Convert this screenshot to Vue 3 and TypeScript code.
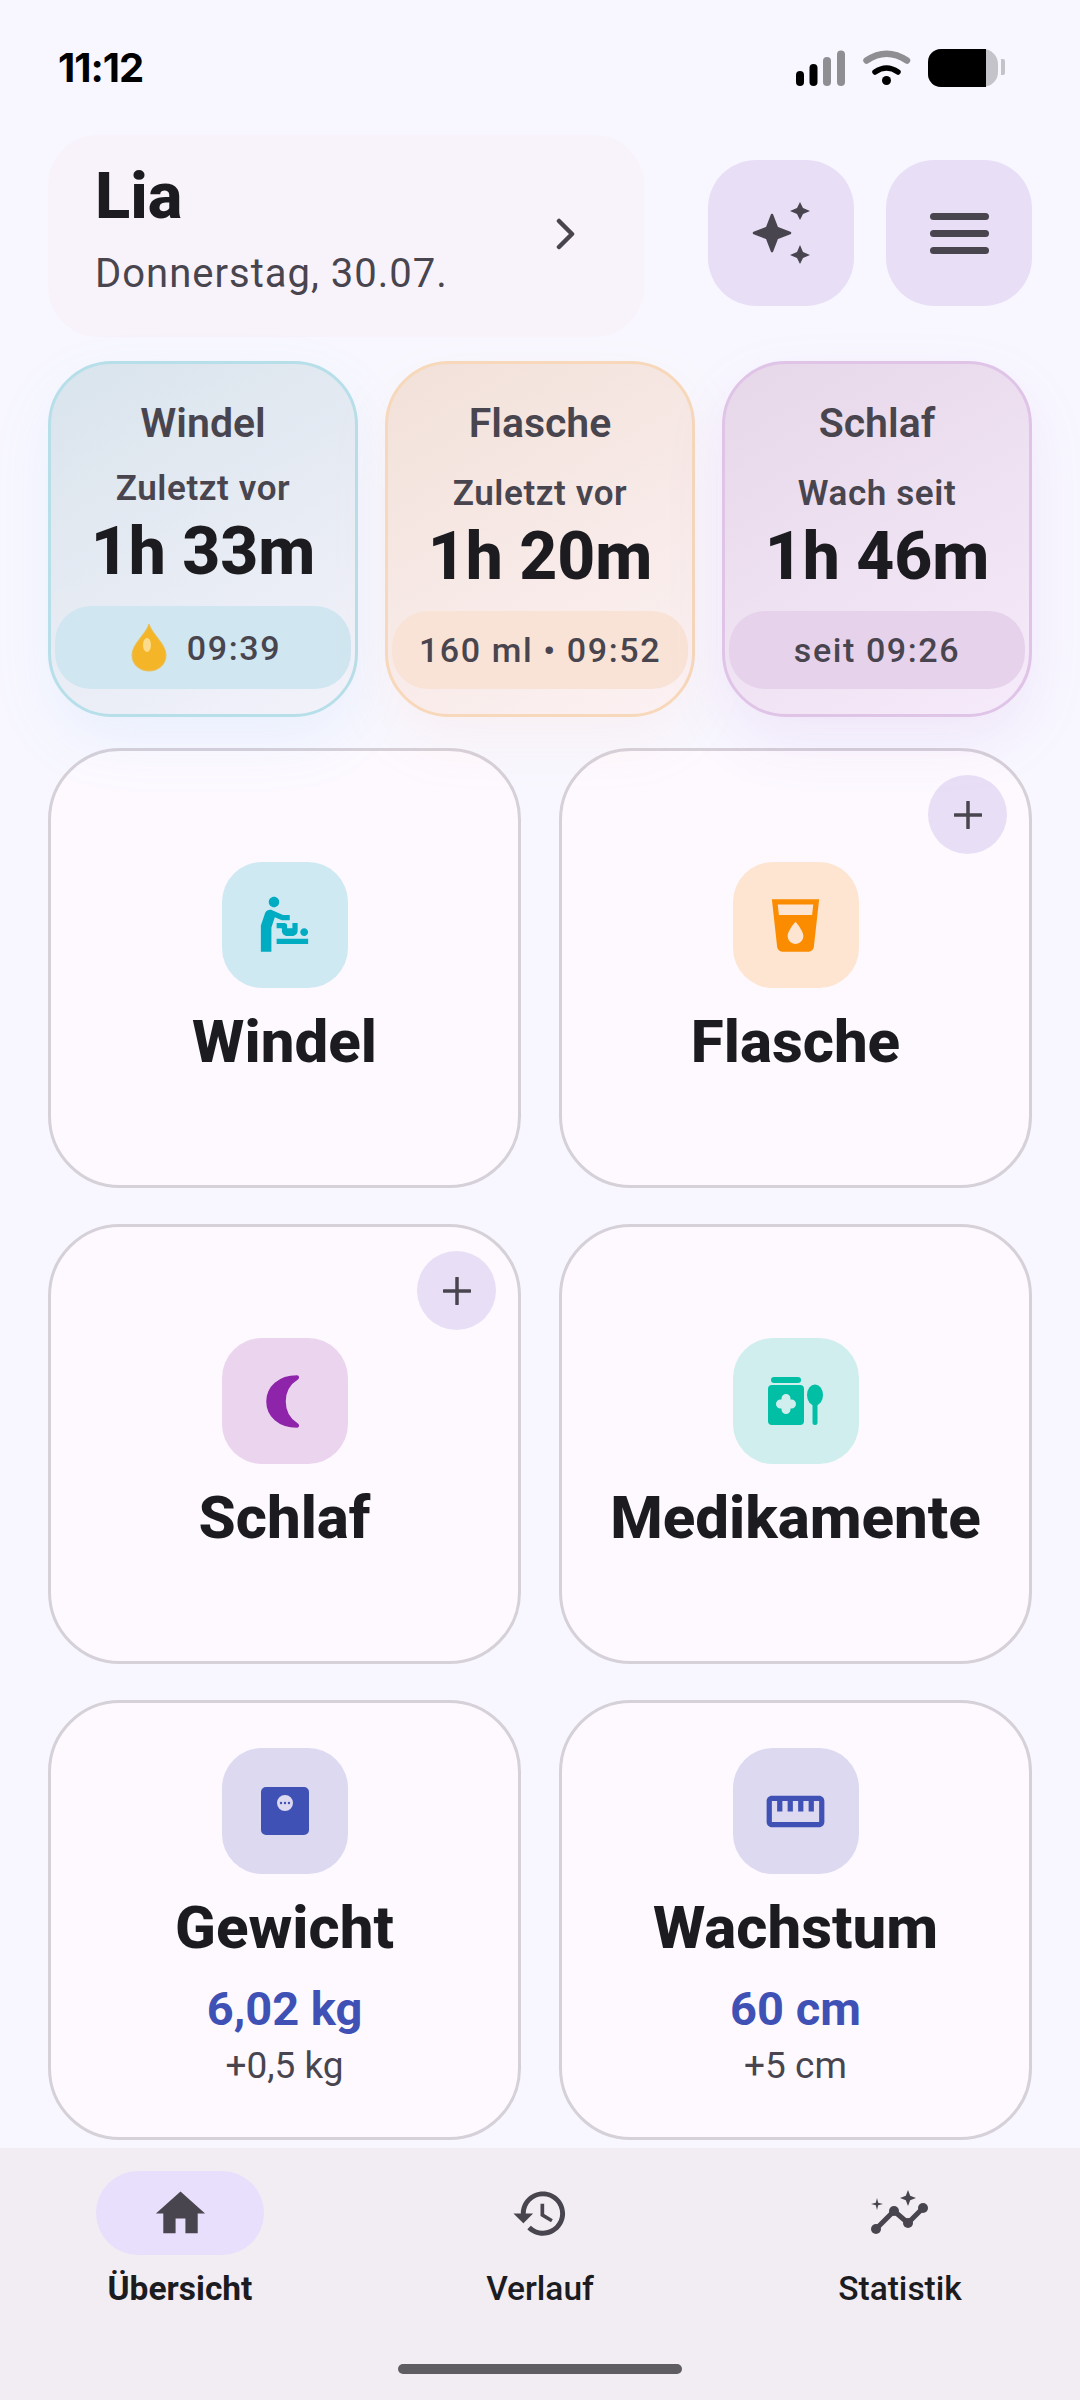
<template>
  <div class="screen">
    <div class="status">
      <span class="time">11:12</span>
      <div class="status-icons">
        <svg class="signal" width="50" height="36" viewBox="0 0 50 36">
          <rect x="0" y="21" width="8" height="15" rx="4" fill="#000" />
          <rect x="13.500" y="14" width="8" height="22" rx="4" fill="#000" />
          <rect x="27" y="7" width="8" height="29" rx="4" fill="#8e8e93" />
          <rect x="41" y="0.500" width="8" height="35.500" rx="4" fill="#8e8e93" />
        </svg>
        <svg class="wifi" width="48" height="36" viewBox="0 0 48 36">
          <path d="M3.500 10.500Q23.500-3 44 10.500" fill="none" stroke="#8e8e93" stroke-width="6.500" stroke-linecap="round" />
          <path d="M12 22Q23.500 14 35 22" fill="none" stroke="#000" stroke-width="5.500" stroke-linecap="round" />
          <circle cx="23.500" cy="30.500" r="4.500" fill="#000" />
        </svg>
        <div class="battery">
          <div class="battery-fill"></div>
          <div class="battery-nub"></div>
        </div>
      </div>
    </div>

    <header class="header">
      <div class="profile">
        <div>
          <div class="name">Lia</div>
          <div class="date">Donnerstag, 30.07.</div>
        </div>
        <svg class="chevron" width="20" height="32" viewBox="0 0 20 32">
          <path d="M3 3l13 13L3 29" fill="none" stroke="#49454f" stroke-width="4.5" stroke-linecap="round" stroke-linejoin="round" />
        </svg>
      </div>
      <button class="round-btn">
        <svg width="60" height="62" viewBox="0 0 60 62" fill="#49454f">
          <path d="M21 13l5 13 13 5-13 5-5 13-5-13-13-5 13-5z" stroke="#49454f" stroke-width="2.500" stroke-linejoin="round" />
          <path d="M49 0l3 6 7 3-7 3-3 6-3-6-7-3 7-3z" />
          <path d="M49 43l3 7 7 3-7 3-3 6-3-6-7-3 7-3z" />
        </svg>
      </button>
      <button class="round-btn">
        <div class="menu-lines"><i></i><i></i><i></i></div>
      </button>
    </header>

    <section class="summary">
      <div v-for="s in summaries" :key="s.title" class="sum-card" :class="s.kind">
        <div class="sum-title">{{ s.title }}</div>
        <div class="sum-sub">{{ s.sub }}</div>
        <div class="sum-value">{{ s.value }}</div>
        <div class="sum-pill">
          <svg v-if="s.drop" class="drop" width="36" height="48" viewBox="0 0 36 48">
            <path d="M18 0c3 10 17 20 17 31 0 10-8 16-17 16S1 41 1 31C1 20 15 10 18 0z" fill="#f4b628" stroke="#e8c060" stroke-width="1" />
            <ellipse cx="16" cy="21" rx="4" ry="7" fill="#fbdc8c" />
          </svg>
          <span>{{ s.pill }}</span>
        </div>
      </div>
    </section>

    <section class="grid">
      <div class="tile-card">
        <div class="tile baby">
          <svg width="63" height="63" viewBox="0 0 24 24"><path d="M14 8v2h-3L8.31 8.82 7 12.75V22H3V12l1.58-4.63C4.96 6.25 6.22 5.69 7.3 6.18l4.15 1.83L14 8zM8 1C6.9 1 6 1.9 6 3s.9 2 2 2 2-.9 2-2-.9-2-2-2zm1 18h12v-2H9v2zm10.5-3c.83 0 1.5-.67 1.5-1.5s-.67-1.5-1.5-1.5-1.5.67-1.5 1.5.67 1.5 1.5 1.5zM13 12c0-.55-.45-1-1-1H9v2h2v1c0 1.1.9 2 2 2h2c1.1 0 2-.9 2-2v-3h-2v2h-2v-1z" /></svg>
        </div>
        <div class="tile-label">Windel</div>
      </div>

      <div class="tile-card">
        <button class="plus"><svg width="28" height="28" viewBox="0 0 28 28"><path d="M14 1v26M1 14h26" stroke="#49454f" stroke-width="3.5" stroke-linecap="round" /></svg></button>
        <div class="tile bottle">
          <svg width="63" height="63" viewBox="0 0 24 24"><path d="M3 2l2.01 18.23C5.13 21.23 5.97 22 7 22h10c1.03 0 1.87-.77 1.99-1.77L21 2H3zm9 17c-1.66 0-3-1.34-3-3 0-2 3-5.4 3-5.4s3 3.4 3 5.4c0 1.66-1.34 3-3 3zm6.33-11H5.67l-.44-4h13.53l-.43 4z" /></svg>
        </div>
        <div class="tile-label">Flasche</div>
      </div>

      <div class="tile-card">
        <button class="plus"><svg width="28" height="28" viewBox="0 0 28 28"><path d="M14 1v26M1 14h26" stroke="#49454f" stroke-width="3.5" stroke-linecap="round" /></svg></button>
        <div class="tile sleep">
          <svg class="moon" width="36" height="55" viewBox="0 0 36 55"><path d="M32 2C14 2 2 13 2 27.500S14 53 32 53c1.500 0 1.800-1.800 .5-2.800C24 45 20 37 20 27.500S24 10 32.500 4.800C33.800 3.800 33.500 2 32 2z" stroke="#8e24aa" stroke-width="1.500" stroke-linejoin="round" /></svg>
        </div>
        <div class="tile-label">Schlaf</div>
      </div>

      <div class="tile-card">
        <div class="tile meds">
          <svg width="56" height="48" viewBox="0 0 56 48">
            <rect x="3" y="0" width="30" height="6" rx="3" />
            <rect x="0" y="8" width="36" height="40" rx="4" />
            <path d="M18 21.500v11M12.500 27h11" fill="none" stroke="#cfeeed" stroke-width="9" stroke-linecap="round" />
            <ellipse cx="47" cy="18" rx="8" ry="10.500" />
            <rect x="44.500" y="24" width="5" height="24" rx="2.500" />
          </svg>
        </div>
        <div class="tile-label">Medikamente</div>
      </div>

      <div class="tile-card">
        <div class="tile indigo">
          <svg width="48" height="48" viewBox="0 0 48 48">
            <path fill-rule="evenodd" d="M5 0h38a5 5 0 0 1 5 5v38a5 5 0 0 1-5 5H5a5 5 0 0 1-5-5V5a5 5 0 0 1 5-5zm19 8a8 8 0 1 0 0 16 8 8 0 0 0 0-16z" />
            <circle cx="20" cy="16" r="1.200" /><circle cx="24" cy="16" r="1.200" /><circle cx="28" cy="16" r="1.200" />
          </svg>
        </div>
        <div class="tile-label">Gewicht</div>
        <div class="tile-value">6,02 kg</div>
        <div class="tile-delta">+0,5 kg</div>
      </div>

      <div class="tile-card">
        <div class="tile indigo">
          <svg width="63" height="63" viewBox="0 0 24 24"><path d="M21 6H3c-1.100 0-2 .9-2 2v8c0 1.100.9 2 2 2h18c1.100 0 2-.9 2-2V8c0-1.100-.9-2-2-2zm0 10H3V8h2v4h2V8h2v4h2V8h2v4h2V8h2v4h2V8h2v8z" /></svg>
        </div>
        <div class="tile-label">Wachstum</div>
        <div class="tile-value">60 cm</div>
        <div class="tile-delta">+5 cm</div>
      </div>
    </section>

    <nav class="nav">
      <div class="nav-item active">
        <div class="nav-pill">
          <svg width="59" height="59" viewBox="0 0 24 24"><path d="M10 20v-6h4v6h5v-8h3L12 3 2 12h3v8z" /></svg>
        </div>
        <span>Übersicht</span>
      </div>
      <div class="nav-item">
        <div class="nav-pill">
          <svg width="59" height="59" viewBox="0 0 24 24"><path d="M13 3c-4.970 0-9 4.030-9 9H1l3.890 3.890.07.14L9 12H6c0-3.870 3.130-7 7-7s7 3.130 7 7-3.130 7-7 7c-1.930 0-3.680-.79-4.940-2.060l-1.420 1.420C8.270 19.990 10.510 21 13 21c4.970 0 9-4.030 9-9s-4.030-9-9-9zm-1 5v5l4.280 2.540.72-1.210-3.500-2.080V8H12z" /></svg>
        </div>
        <span>Verlauf</span>
      </div>
      <div class="nav-item">
        <div class="nav-pill">
          <svg width="60" height="46" viewBox="0 0 60 46">
            <path d="M6 39l18-18 14 12 15-15" fill="none" stroke="#49454f" stroke-width="5" stroke-linejoin="round" stroke-linecap="round" />
            <circle cx="6" cy="39" r="5" /><circle cx="24" cy="21" r="5" /><circle cx="38" cy="33" r="5" /><circle cx="53" cy="18" r="5" />
            <path d="M38 0l2.200 5.800L46 8l-5.800 2.200L38 16l-2.200-5.800L30 8l5.800-2.200z" />
            <path d="M7 8l1.200 4.800L13 14l-4.800 1.200L7 20l-1.200-4.800L1 14l4.800-1.200z" />
          </svg>
        </div>
        <span>Statistik</span>
      </div>
      <div class="home-bar"></div>
    </nav>
  </div>
</template>

<script setup lang="ts">
interface Summary {
  kind: string
  title: string
  sub: string
  value: string
  pill: string
  drop?: boolean
}

const summaries: Summary[] = [
  { kind: 'blue', title: 'Windel', sub: 'Zuletzt vor', value: '1h 33m', pill: '09:39', drop: true },
  { kind: 'orange', title: 'Flasche', sub: 'Zuletzt vor', value: '1h 20m', pill: '160 ml • 09:52' },
  { kind: 'purple', title: 'Schlaf', sub: 'Wach seit', value: '1h 46m', pill: 'seit 09:26' },
]
</script>

<style>
html,
body {
  margin: 0;
  background: #f8f7ff;
}
</style>

<style scoped>
.screen {
  width: 1080px;
  height: 2400px;
  background: #f8f7ff;
  color: #1c1b1f;
  font-family: Roboto, "Noto Sans", sans-serif;
  display: flex;
  flex-direction: column;
  overflow: hidden;
}
button {
  border: 0;
  padding: 0;
  display: flex;
  align-items: center;
  justify-content: center;
}

.status {
  height: 135px;
  flex: none;
  display: flex;
  justify-content: space-between;
  align-items: flex-start;
  padding: 0 82px 0 58px;
  box-sizing: border-box;
}
.time {
  margin-top: 43px;
  font-family: Inter, Roboto, sans-serif;
  font-size: 40px;
  font-weight: 700;
  letter-spacing: -1px;
  color: #000;
}
.status-icons {
  margin-top: 49px;
  display: flex;
  align-items: center;
  gap: 17px;
}
.battery {
  position: relative;
  width: 70px;
  height: 38px;
  border-radius: 13px 15px 15px 13px;
  background: #c4c3c9;
}
.battery-fill {
  width: 58px;
  height: 38px;
  background: #000;
  border-radius: 13px 0 0 13px;
}
.battery-nub {
  position: absolute;
  top: 10px;
  right: -7px;
  width: 4px;
  height: 16px;
  border-radius: 0 2px 2px 0;
  background: #c4c3c9;
}

.header {
  height: 202px;
  flex: none;
  display: flex;
  align-items: center;
  padding: 0 48px;
  box-sizing: border-box;
}
.profile {
  width: 596px;
  height: 202px;
  margin-right: 64px;
  box-sizing: border-box;
  padding: 0 68px 16px 47px;
  border-radius: 50px;
  background: #f8f3fa;
  display: flex;
  align-items: center;
  justify-content: space-between;
}
.chevron {
  margin-top: 12px;
}
.name {
  font-size: 65px;
  font-weight: 800;
  line-height: 75px;
}
.date {
  margin-top: 16px;
  font-size: 40px;
  line-height: 47px;
  color: #49454f;
  letter-spacing: 1px;
}
.round-btn {
  width: 146px;
  height: 146px;
  margin-bottom: 6px;
  border-radius: 48px;
  background: #e8dff6;
}
.round-btn + .round-btn {
  margin-left: 32px;
}
.menu-lines {
  display: flex;
  flex-direction: column;
  gap: 10px;
}
.menu-lines i {
  display: block;
  width: 59px;
  height: 7px;
  border-radius: 4px;
  background: #49454f;
}

.summary {
  position: relative;
  z-index: 1;
  margin-top: 24px;
  padding: 0 48px;
  display: grid;
  grid-template-columns: repeat(3, 310px);
  column-gap: 27px;
  flex: none;
}
.sum-card {
  height: 356px;
  box-sizing: border-box;
  border: 3px solid;
  border-radius: 64px;
  padding: 0 4px 25px;
  display: flex;
  flex-direction: column;
  align-items: center;
}
.blue {
  background: linear-gradient(150deg, #d9e4ec, #f3f2fb);
  border-color: #b7dfe9;
  box-shadow: 0 24px 60px rgba(120, 190, 240, 0.1);
}
.orange {
  background: linear-gradient(150deg, #f2e1d9, #fcf1f3);
  border-color: #f7d8ba;
  box-shadow: 0 24px 60px rgba(250, 180, 130, 0.09);
}
.purple {
  background: linear-gradient(150deg, #e6d7e9, #f6ebfa);
  border-color: #dfc4e8;
  box-shadow: 0 24px 60px rgba(170, 90, 200, 0.1);
}
.sum-title {
  margin-top: 37px;
  font-size: 41px;
  line-height: 45px;
  font-weight: 600;
  color: #49454f;
}
.sum-sub {
  margin-top: auto;
  font-size: 35px;
  line-height: 40px;
  font-weight: 600;
  color: #49454f;
  letter-spacing: 0.6px;
}
.sum-value {
  font-size: 66px;
  line-height: 75px;
  font-weight: 800;
  margin-top: 5px;
  margin-bottom: 17px;
}
.sum-pill {
  align-self: stretch;
  min-height: 78px;
  border-radius: 36px;
  display: flex;
  align-items: center;
  justify-content: center;
  gap: 20px;
  font-size: 34px;
  font-weight: 500;
  color: #49454f;
  letter-spacing: 1.6px;
  box-sizing: border-box;
}
.blue .sum-pill {
  min-height: 83px;
  padding-left: 6px;
  background: #d0e6f0;
}
.orange .sum-pill {
  background: #f9e3d6;
}
.purple .sum-pill {
  background: #e7d2ec;
}

.grid {
  margin-top: 31px;
  padding: 0 48px;
  display: grid;
  grid-template-columns: 473px 473px;
  grid-auto-rows: 440px;
  column-gap: 38px;
  row-gap: 36px;
  flex: 1;
}
.tile-card {
  position: relative;
  box-sizing: border-box;
  border: 3px solid #d6d0d9;
  border-radius: 72px;
  background: #fdf9ff;
  padding-top: 4px;
  display: flex;
  flex-direction: column;
  align-items: center;
  justify-content: center;
}
.tile {
  width: 126px;
  height: 126px;
  border-radius: 40px;
  flex: none;
  display: flex;
  align-items: center;
  justify-content: center;
}
.baby {
  background: #cfe9f3;
  fill: #00acc1;
}
.bottle {
  background: #fde5d1;
  fill: #fb8c00;
}
.sleep {
  background: #ead4ee;
  fill: #8e24aa;
}
.moon {
  margin-right: 3px;
}
.meds {
  background: #cfeeed;
  fill: #00bfa5;
}
.indigo {
  background: #dcd9f0;
  fill: #3f51b5;
}
.tile-label {
  margin-top: 18px;
  font-size: 60px;
  line-height: 72px;
  font-weight: 800;
}
.tile-value {
  margin-top: 19px;
  font-size: 47px;
  line-height: 52px;
  font-weight: 700;
  color: #3f51b5;
}
.tile-delta {
  margin-top: 11px;
  margin-bottom: 10px;
  font-size: 37px;
  line-height: 40px;
  color: #49454f;
}
.plus {
  position: absolute;
  top: 24px;
  right: 22px;
  width: 79px;
  height: 79px;
  border-radius: 50%;
  background: #e8dff6;
}

.nav {
  position: relative;
  height: 252px;
  flex: none;
  background: #f1edf3;
  display: grid;
  grid-template-columns: repeat(3, 360px);
}
.nav-item {
  display: flex;
  flex-direction: column;
  align-items: center;
  padding-top: 23px;
  font-size: 33.5px;
  line-height: 40px;
  font-weight: 500;
  fill: #49454f;
}
.nav-item.active {
  font-weight: 700;
}
.nav-pill {
  width: 168px;
  height: 84px;
  border-radius: 42px;
  display: flex;
  align-items: center;
  justify-content: center;
  margin-bottom: 14px;
}
.active .nav-pill {
  background: #e8dffc;
}
.home-bar {
  position: absolute;
  left: 398px;
  top: 216px;
  width: 284px;
  height: 10px;
  border-radius: 5px;
  background: #605d62;
}
</style>
